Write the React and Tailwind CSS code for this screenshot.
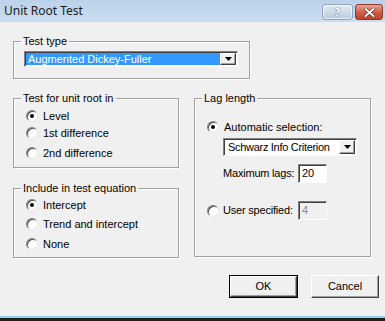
import { useState } from "react";

const Radio = ({ checked }) => (
    <span className="relative w-3 h-3 shrink-0 rounded-full bg-white border border-t-[#808080] border-l-[#808080] border-r-[#e8e8e8] border-b-[#e8e8e8] shadow-[inset_1px_1px_0_#505050]">
        {checked && <span className="absolute left-[3px] top-[3px] w-1 h-1 rounded-full bg-black" />}
    </span>
);

const RadioRow = ({ checked, label, className = "" }) => (
    <div className={`flex items-center h-4 ${className}`}>
        <Radio checked={checked} />
        <span className="ml-[5px]">{label}</span>
    </div>
);

const Arrow = () => (
    <span className="flex items-center justify-center w-4 h-full bg-[#f0f0f0] border border-t-white border-l-white border-r-[#404040] border-b-[#404040] shadow-[inset_-1px_-1px_0_#a0a0a0]">
        <svg width="7" height="4" viewBox="0 0 7 4">
            <polygon points="0,0 7,0 3.5,4" fill="#000" />
        </svg>
    </span>
);

const Sunken = ({ className = "", children }) => (
    <div className={`border border-t-[#808080] border-l-[#808080] border-r-white border-b-white shadow-[inset_1px_1px_0_#404040] ${className}`}>
        {children}
    </div>
);

const Group = ({ title, className = "", children }) => (
    <fieldset className={`border border-[#a0a0a0] shadow-[inset_1px_1px_0_#fff,1px_1px_0_#fff] ${className}`}>
        <legend className="ml-[7px] px-[2px] leading-[13px]">{title}</legend>
        {children}
    </fieldset>
);

const WinButton = ({ label, isDefault }) => (
    <button
        className={`h-[23px] bg-[#f0f0f0] flex items-center justify-center ${
            isDefault ? "w-[69px] border border-black" : "w-[68px]"
        }`}
    >
        <span className="w-full h-full flex items-center justify-center border border-t-white border-l-white border-r-[#404040] border-b-[#404040] shadow-[inset_-1px_-1px_0_#a0a0a0]">
            {label}
        </span>
    </button>
);

export default function App() {
    const [unitRoot, setUnitRoot] = useState("level");
    return (
        <div className="w-[385px] h-[321px] flex flex-col overflow-hidden font-['Liberation_Sans',sans-serif] text-[11px] text-black">
            {/* title bar */}
            <div className="h-[22px] flex bg-gradient-to-b from-[#bcd2ea] to-[#cbddf1]">
                <span className="pl-1 pt-[3px] font-['Noto_Sans',sans-serif] text-[12px] leading-[16px] text-[#1a1a1a]">
                    Unit Root Test
                </span>
                <div className="ml-auto flex gap-[2px] pt-1 pr-[2px]">
                    <div className="w-[31px] h-[16px] rounded-[3px] border border-[#8fa5c0] bg-gradient-to-b from-[#e2ebf5] to-[#b8cbe0] flex items-center justify-center shadow-[inset_0_0_0_1px_rgba(255,255,255,0.6)]">
                        <span className="font-['DejaVu_Sans',sans-serif] font-bold text-[11px] leading-none text-white [text-shadow:0_0_1px_#50607a,0_0_1px_#50607a]">?</span>
                    </div>
                    <div className="w-[28px] h-[16px] rounded-[3px] border border-[#8b3a2e] bg-gradient-to-b from-[#e8a597] via-[#d0604a] to-[#c0402a] flex items-center justify-center">
                        <svg width="11" height="9" viewBox="0 0 11 9">
                            <path d="M1.5 1 L9.5 8 M9.5 1 L1.5 8" stroke="#4a1a12" strokeWidth="3" strokeLinecap="round" />
                            <path d="M1.5 1 L9.5 8 M9.5 1 L1.5 8" stroke="#fff" strokeWidth="2" strokeLinecap="round" />
                        </svg>
                    </div>
                </div>
            </div>

            {/* body */}
            <div className="h-[294px] bg-[#f0f0f0] pt-[13px] pl-[13px]">
                <Group title="Test type" className="w-[237px] h-[44px]">
                    <Sunken className="mt-[3px] ml-[10px] w-[214px] h-[16px] flex bg-white p-[1px]">
                        <div className="flex-1 bg-[#3399ff] text-white pl-[2px] leading-[12px]">Augmented Dickey-Fuller</div>
                        <Arrow />
                    </Sunken>
                </Group>

                <div className="flex mt-[13px]">
                    <div className="w-[166px] flex flex-col">
                        <Group title="Test for unit root in" className="h-[76px]">
                            <div className="pl-3" onClick={() => setUnitRoot("level")}>
                                <RadioRow checked={unitRoot === "level"} label="Level" className="mt-[3px]" />
                                <RadioRow checked={false} label="1st difference" className="mt-[1px]" />
                                <RadioRow checked={false} label="2nd difference" className="mt-1" />
                            </div>
                        </Group>
                        <Group title="Include in test equation" className="h-[76px] mt-[14px]">
                            <div className="pl-3">
                                <RadioRow checked label="Intercept" className="mt-[2px]" />
                                <RadioRow checked={false} label="Trend and intercept" className="mt-[3px]" />
                                <RadioRow checked={false} label="None" className="mt-1" />
                            </div>
                        </Group>
                    </div>

                    <Group title="Lag length" className="ml-[15px] w-[177px] h-[165px]">
                        <div className="pl-3">
                            <RadioRow checked label="Automatic selection:" className="mt-[14px]" />
                            <Sunken className="mt-[3px] ml-4 w-[134px] h-[18px] flex bg-white p-[1px]">
                                <div className="flex-1 pl-[3px] leading-[14px] tracking-[-0.3px] whitespace-nowrap overflow-hidden">Schwarz Info Criterion</div>
                                <Arrow />
                            </Sunken>
                            <div className="flex items-center mt-2 h-[19px]">
                                <span className="w-4" />
                                <span className="w-[75px] whitespace-nowrap tracking-[-0.2px]">Maximum lags:</span>
                                <Sunken className="w-[29px] h-[19px] bg-white pl-[3px] leading-[17px]">20</Sunken>
                            </div>
                            <div className="flex items-center mt-[18px] h-[19px]">
                                <Radio checked={false} />
                                <span className="w-[75px] ml-1 whitespace-nowrap tracking-[-0.2px]">User specified:</span>
                                <Sunken className="w-[29px] h-[19px] bg-[#f0f0f0] text-[#8a8a8a] pl-[3px] leading-[17px]">4</Sunken>
                            </div>
                        </div>
                    </Group>
                </div>

                <div className="flex justify-end gap-[13px] pr-[6px] mt-[17px]">
                    <WinButton label="OK" isDefault />
                    <WinButton label="Cancel" />
                </div>
            </div>

            {/* window frame bottom */}
            <div className="h-[2px] bg-[#8fd2f0]" />
            <div className="h-[3px] bg-[#1e1e1e]" />
        </div>
    );
}
